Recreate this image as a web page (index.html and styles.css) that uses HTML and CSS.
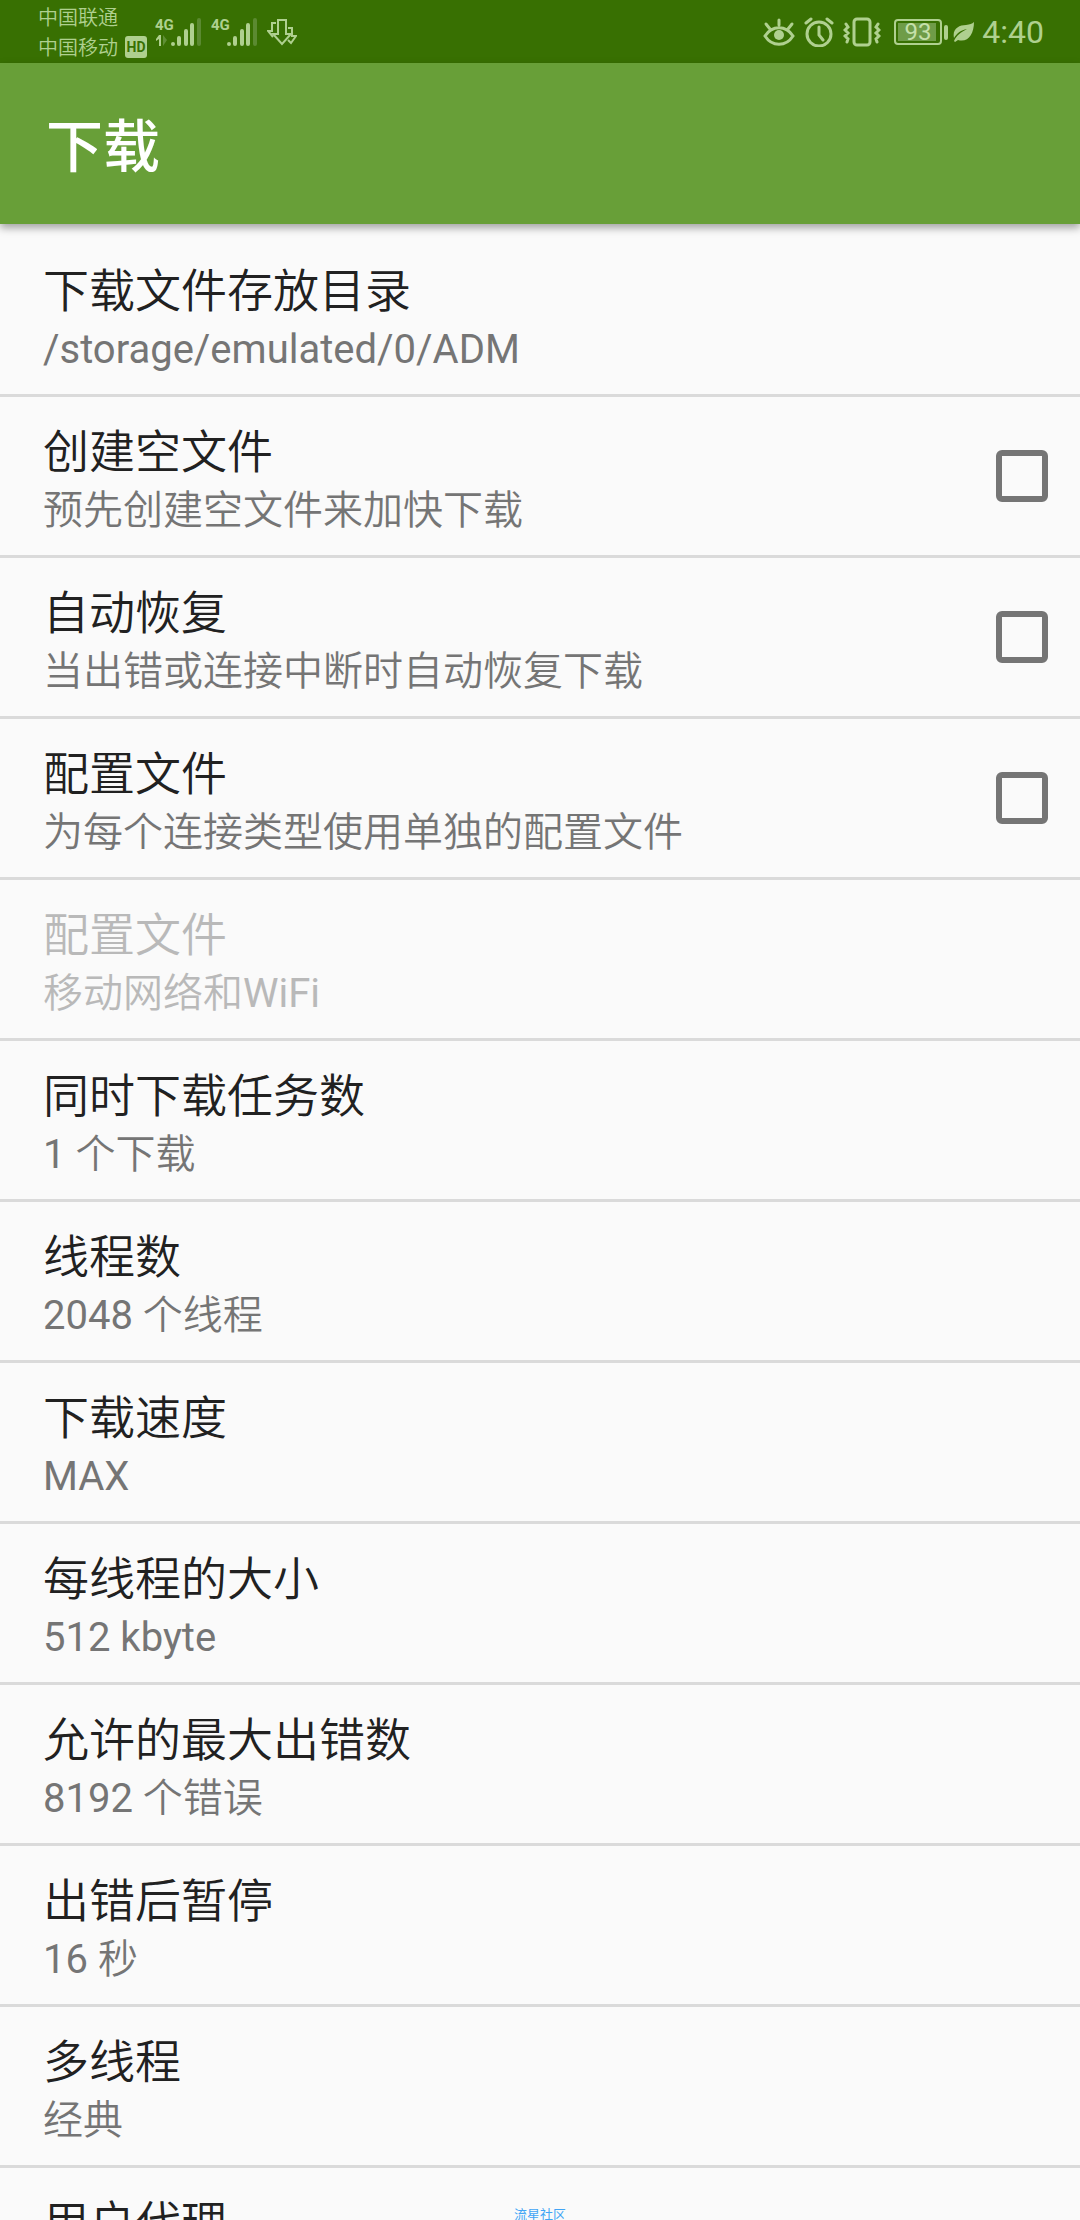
FILE: index.html
```html
<!DOCTYPE html>
<html lang="zh-CN">

<head>
    <meta charset="UTF-8">
    <meta name="viewport" content="width=device-width, initial-scale=1.0">
    <title>下载</title>
    <link rel="stylesheet" href="styles.css">
</head>

<body>
    <div class="status-bar">
        <div class="carriers">
            <div class="carrier">中国联通</div>
            <div class="carrier">中国移动<span class="hd">HD</span></div>
        </div>
        <svg class="signal" width="48" height="30" viewBox="0 0 48 30">
            <text class="network" x="0" y="13">4G</text>
            <path class="fill" d="M4 18h2v11H4v-7l-3 2v-2z" />
            <path class="faint" d="M8 18v11l4-6z" />
            <path class="bars" d="M18 27v0M24 21v6M31 14v13M37 8v19" />
            <path class="bars faint-bar" d="M44 3v24" />
        </svg>
        <svg class="signal" width="48" height="30" viewBox="0 0 48 30">
            <text class="network" x="0" y="13">4G</text>
            <path class="bars" d="M18 27v0M24 21v6M31 14v13M37 8v19" />
            <path class="bars faint-bar" d="M44 3v24" />
        </svg>
        <svg class="transfer" width="30" height="28" viewBox="0 0 30 28">
            <path class="line" d="M9 5H5v8H1l5 6M21 10h4v8h4l-5 7-3-3" />
            <path class="line" d="M11 2h8v14h5l-9 10-9-10h5z" />
        </svg>

        <div class="status-right">
            <svg width="32" height="28" viewBox="0 0 32 28">
                <path class="stroke" d="M2 18C9 7 23 7 30 18C23 29 9 29 2 18zM16 2v5M3 6l4 5M29 6l-4 5" />
                <circle class="fill" cx="16" cy="17" r="5" />
            </svg>
            <svg width="30" height="30" viewBox="0 0 30 30">
                <circle class="stroke" cx="15" cy="17" r="12" />
                <path class="stroke" d="M15 10v8l4 5M2 6l5-4M28 6l-5-4" />
            </svg>
            <svg width="38" height="30" viewBox="0 0 38 30">
                <rect class="stroke" x="11" y="2" width="16" height="26" rx="3" />
                <path class="stroke" d="M3 7l2 3-3 3 3 3-3 3 3 3-1 3M35 7l-2 3 3 3-3 3 3 3-3 3 1 3" />
            </svg>
            <svg class="battery" width="54" height="26" viewBox="0 0 54 26">
                <rect class="line" x="1" y="1" width="46" height="24" rx="3" />
                <rect class="level" x="4" y="4" width="38" height="18" />
                <rect class="fill" x="50" y="6" width="4" height="15" rx="2" />
                <text class="percent" x="24" y="21">93</text>
            </svg>
            <svg class="leaf" width="22" height="22" viewBox="0 0 22 22">
                <path class="fill" d="M21 1C21 13 15 22 5 19l-3 2-1-1C3 15 8 11 14 8 8 9 4 12 1 17 -1 8 6 4 13 4 17 3 19 3 21 1z" />
            </svg>
            <span class="clock">4:40</span>
        </div>
    </div>

    <header class="app-bar">
        <h1>下载</h1>
    </header>

    <main class="settings">
        <button class="item" type="button">
            <span class="title">下载文件存放目录</span>
            <span class="summary">/storage/emulated/0/ADM</span>
        </button>
        <label class="item check-item" for="empty_file">
            <span class="text">
                <span class="title">创建空文件</span>
                <span class="summary cjk">预先创建空文件来加快下载</span>
            </span>
            <input type="checkbox" id="empty_file">
        </label>
        <label class="item check-item" for="auto_resume">
            <span class="text">
                <span class="title">自动恢复</span>
                <span class="summary cjk">当出错或连接中断时自动恢复下载</span>
            </span>
            <input type="checkbox" id="auto_resume">
        </label>
        <label class="item check-item" for="use_profiles">
            <span class="text">
                <span class="title">配置文件</span>
                <span class="summary cjk">为每个连接类型使用单独的配置文件</span>
            </span>
            <input type="checkbox" id="use_profiles">
        </label>
        <button class="item" type="button" disabled>
            <span class="title">配置文件</span>
            <span class="summary"><span class="cjk">移动网络和</span>WiFi</span>
        </button>
        <button class="item" type="button">
            <span class="title">同时下载任务数</span>
            <span class="summary">1 <span class="cjk">个下载</span></span>
        </button>
        <button class="item" type="button">
            <span class="title">线程数</span>
            <span class="summary">2048 <span class="cjk">个线程</span></span>
        </button>
        <button class="item" type="button">
            <span class="title">下载速度</span>
            <span class="summary">MAX</span>
        </button>
        <button class="item" type="button">
            <span class="title">每线程的大小</span>
            <span class="summary">512 kbyte</span>
        </button>
        <button class="item" type="button">
            <span class="title">允许的最大出错数</span>
            <span class="summary">8192 <span class="cjk">个错误</span></span>
        </button>
        <button class="item" type="button">
            <span class="title">出错后暂停</span>
            <span class="summary">16 <span class="cjk">秒</span></span>
        </button>
        <button class="item" type="button">
            <span class="title">多线程</span>
            <span class="summary cjk">经典</span>
        </button>
        <button class="item" type="button">
            <span class="title">用户代理</span>
        </button>
    </main>

    <div class="watermark">流星社区</div>
</body>

</html>
```

FILE: styles.css
```css
* {
    box-sizing: border-box;
}

body {
    display: flex;
    flex-direction: column;
    height: 100vh;
    margin: 0;
    overflow: hidden;
    background-color: #fafafa;
    font-family: Roboto, "Noto Sans CJK SC", sans-serif;
}

.status-bar {
    display: flex;
    flex: none;
    align-items: center;
    height: 63px;
    padding: 0 36px 0 38px;
    background-color: #387002;
    color: #afd08f;
}

.carrier {
    display: flex;
    align-items: center;
    height: 30px;
    font-size: 20px;
    font-weight: 350;
}

.hd {
    width: 22px;
    margin-left: 7px;
    border-radius: 3px;
    background-color: #afd08f;
    color: #387002;
    font-size: 14px;
    font-weight: 700;
    line-height: 22px;
    text-align: center;
}

.signal {
    margin-left: 8px;
}

.transfer {
    margin-left: 8px;
}

.network {
    fill: #afd08f;
    font-size: 15px;
    font-weight: 700;
}

.fill {
    fill: #afd08f;
}

.faint {
    fill: #5f8f35;
}

.bars {
    fill: none;
    stroke: #afd08f;
    stroke-width: 4;
    stroke-linecap: round;
}

.faint-bar {
    stroke: #5b8a31;
}

.line {
    fill: none;
    stroke: #afd08f;
    stroke-width: 2;
}

.stroke {
    fill: none;
    stroke: #afd08f;
    stroke-width: 3;
    stroke-linecap: round;
}

.status-right {
    display: flex;
    align-items: center;
    gap: 9px;
    margin-left: auto;
}

.battery {
    margin-left: 4px;
}

.leaf {
    margin-left: -4px;
}

.level {
    fill: #6f9c48;
}

.percent {
    fill: #c5e0aa;
    font-size: 24px;
    text-anchor: middle;
}

.clock {
    margin-left: -2px;
    font-size: 32px;
}

.app-bar {
    display: flex;
    flex: none;
    align-items: center;
    height: 161px;
    padding: 0 46px 4px;
    background-color: #689f38;
    box-shadow: 0 4px 8px rgba(0, 0, 0, 0.35);
    color: #fff;
}

h1 {
    margin: 0;
    font-size: 57px;
    font-weight: 500;
}

.settings {
    flex: 1;
    min-height: 0;
    padding-top: 12px;
    overflow: hidden;
}

.item {
    display: block;
    width: 100%;
    padding: 20px 32px 20px 43px;
    border: none;
    border-bottom: 3px solid #dadada;
    background: none;
    color: #212121;
    font-family: inherit;
    text-align: left;
    cursor: pointer;
}

.check-item {
    display: flex;
    align-items: center;
    justify-content: space-between;
}

.title {
    display: block;
    font-size: 46px;
    font-weight: 350;
    line-height: 70px;
}

.summary {
    display: block;
    color: #757575;
    font-size: 40px;
    line-height: 48px;
}

.cjk {
    font-weight: 350;
}

.item:disabled {
    cursor: default;
}

.item:disabled .title,
.item:disabled .summary {
    color: #b9b9b9;
}

input[type="checkbox"] {
    appearance: none;
    width: 52px;
    height: 52px;
    margin: 0;
    border: 6px solid #757575;
    border-radius: 6px;
}

input[type="checkbox"]:checked {
    background-color: #689f38;
}

.watermark {
    position: absolute;
    bottom: -3px;
    left: 0;
    width: 100%;
    color: #42a5f5;
    font-size: 13px;
    line-height: 16px;
    text-align: center;
    pointer-events: none;
}
```
